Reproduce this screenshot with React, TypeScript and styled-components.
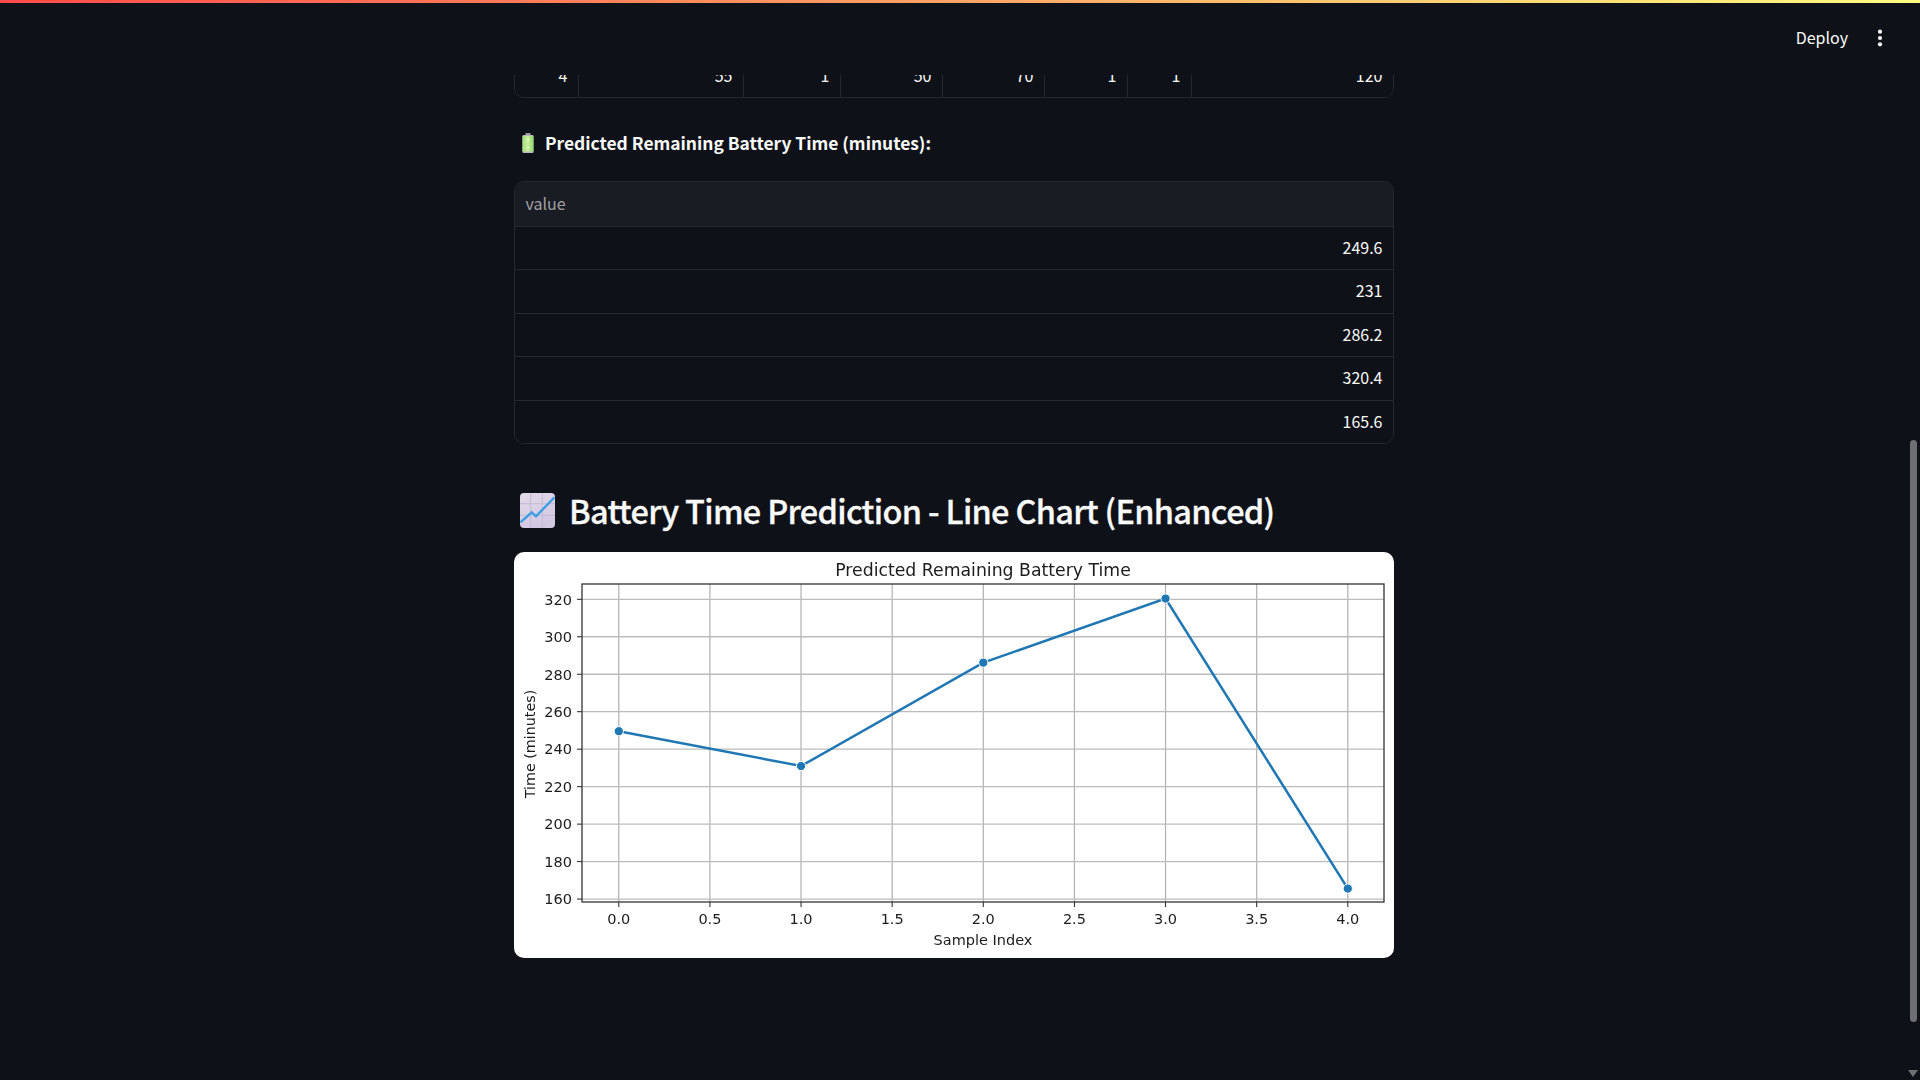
import styled, { createGlobalStyle } from "styled-components";

const GlobalStyle = createGlobalStyle`
    html, body {margin:0;padding:0;background:#0e1117;height:100%;overflow:hidden;}
    #root {height:100%;}
    * {box-sizing:border-box;}
`;

const SANS = `"Noto Sans CJK SC", "Source Sans Pro", "Noto Sans", sans-serif`;

const Page = styled.div`
    position: relative;
    height: 1080px;
    display: flex;
    flex-direction: column;
    background: #0e1117;
    color: #fafafa;
    font-family: ${SANS};
    overflow: hidden;
`;
const Header = styled.header`
    flex: 0 0 75px;
    position: relative;
    z-index: 2;
    background: #0e1117;
    display: flex;
    justify-content: flex-end;
    align-items: center;
    gap: 29px;
    padding: 0 37px 0 0;
    &::before {
        content: "";
        position: absolute;
        left: 0;
        right: 0;
        top: 0;
        height: 3px;
        background: linear-gradient(90deg, rgb(255,75,75), rgb(255,253,128));
    }
`;
const Deploy = styled.span`
    font-size: 16px;
    line-height: 30px;
    margin-bottom: 1px;
    color: #fafafa;
`;
const Main = styled.main`
    flex: 1;
    display: flex;
    justify-content: center;
    padding-right: 12px;
    overflow: hidden;
`;
const Column = styled.div`
    width: 880px;
    flex: none;
`;
const Table = styled.div<{ $clip?: number }>`
    margin-top: ${(p) => (p.$clip ? -p.$clip : 22)}px;
    border: 1px solid #26282e;
    border-radius: 10px;
    overflow: hidden;
    font-size: 16px;
`;
const Row = styled.div<{ $head?: boolean; $cols?: string }>`
    height: 43.5px;
    display: grid;
    grid-template-columns: ${(p) => p.$cols || "1fr"};
    background: ${(p) => (p.$head ? "#1a1c24" : "#0e1117")};
    & + & {border-top: 1px solid #26282e;}
`;
const Cell = styled.div<{ $head?: boolean }>`
    padding: 0 10.5px 2px;
    display: flex;
    align-items: center;
    justify-content: ${(p) => (p.$head ? "flex-start" : "flex-end")};
    color: ${(p) => (p.$head ? "rgba(250,250,250,0.6)" : "#fafafa")};
    & + & {border-left: 1px solid #26282e;}
`;
const ClippedCell = styled(Cell)`
    padding-bottom: 0;
`;
const Subheading = styled.p`
    margin: 29.5px 0 0;
    height: 32px;
    display: flex;
    align-items: center;
    gap: 11px;
    padding: 0 0 1px 8px;
    font-size: 17.4px;
    font-weight: 700;
    white-space: nowrap;
`;
const Title = styled.h2`
    margin: 40px 0 14px;
    height: 54px;
    display: flex;
    align-items: center;
    gap: 14px;
    padding: 0 0 2px 6px;
    font-size: 32.5px;
    font-weight: 500;
    letter-spacing: -0.7px;
    -webkit-text-stroke: 0.3px #fafafa;
    line-height: 52px;
    white-space: nowrap;
`;
const ChartCard = styled.div`
    height: 406px;
    background: #fff;
    border-radius: 10px;
    overflow: hidden;
    & svg {display:block;filter:blur(0.45px);}
    & text {font-family:"DejaVu Sans", sans-serif;fill:#1c1c1c;}
`;
const ScrollThumb = styled.div`
    position: absolute;
    left: 1910px;
    top: 440px;
    width: 7px;
    height: 582px;
    border-radius: 4px;
    background: #6e6f72;
`;
const ScrollArrow = styled.div`
    position: absolute;
    left: 1908px;
    top: 1070px;
    border-left: 5.5px solid transparent;
    border-right: 5.5px solid transparent;
    border-top: 7px solid #6e6f72;
`;

const firstCols = "63px 165px 97px 102px 102px 83px 64px 1fr";
const firstRow = ["4", "55", "1", "50", "70", "1", "1", "120"];
const predictions = ["249.6", "231", "286.2", "320.4", "165.6"];

const chart = { left: 68, right: 870, top: 32, bottom: 350 };
const xAt = (v: number) => 104.8 + v * 182.25;
const yAt = (v: number) => 47.3 + (320 - v) * 1.8735;
const xTicks = [0, 0.5, 1, 1.5, 2, 2.5, 3, 3.5, 4];
const yTicks = [160, 180, 200, 220, 240, 260, 280, 300, 320];
const points = [249.6, 231, 286.2, 320.4, 165.6];

function MoreIcon() {
    return (
        <svg width="6" height="20" viewBox="0 0 6 20">
            <circle cx="3" cy="3.7" r="2.1" fill="#fafafa" />
            <circle cx="3" cy="10" r="2.1" fill="#fafafa" />
            <circle cx="3" cy="16.3" r="2.1" fill="#fafafa" />
        </svg>
    );
}

function BatteryEmoji() {
    return (
        <svg width="12" height="20" viewBox="0 0 12 20">
            <defs>
                <linearGradient id="batt" x1="0" y1="0" x2="1" y2="0">
                    <stop offset="0" stopColor="#a6e07c" />
                    <stop offset="0.5" stopColor="#c8f09c" />
                    <stop offset="1" stopColor="#8fd468" />
                </linearGradient>
            </defs>
            <rect x="3.5" y="0" width="5" height="3" rx="0.6" fill="#9b9ba0" />
            <rect x="0.5" y="2" width="11" height="18" rx="1" fill="#b9b9bd" />
            <rect x="0.5" y="3" width="11" height="15.5" fill="url(#batt)" />
            <path d="M5 6.5h2M6 5.5v2M5 14.5h2" stroke="#fff" strokeWidth="0.9" />
        </svg>
    );
}

function ChartEmoji() {
    return (
        <svg width="35" height="35" viewBox="0 0 35 35">
            <defs>
                <linearGradient id="paper" x1="0" y1="0" x2="0.4" y2="1">
                    <stop offset="0" stopColor="#e2dbe9" />
                    <stop offset="1" stopColor="#d3c8e2" />
                </linearGradient>
            </defs>
            <rect width="35" height="35" rx="4" fill="url(#paper)" />
            <path d="M10.7 0v35M22.3 0v35M0 10.7h35M0 22.3h35" stroke="#c4b9d3" strokeWidth="1" />
            <path d="M0.5 29.3L11.7 19.3L16 23.3L34.5 4.3" fill="none" stroke="#3d9fe2" strokeWidth="2.4" />
        </svg>
    );
}

function LineChart() {
    const line = points.map((v, i) => `${xAt(i)},${yAt(v)}`).join(" ");
    return (
        <svg width="880" height="406" viewBox="0 0 880 406">
            <text x="469" y="23.5" fontSize="17.3" textAnchor="middle">Predicted Remaining Battery Time</text>
            {xTicks.map((t) => (
                <g key={t}>
                    <line x1={xAt(t)} x2={xAt(t)} y1={chart.top} y2={chart.bottom} stroke="#b0b0b0" strokeWidth="1.2" />
                    <line x1={xAt(t)} x2={xAt(t)} y1={chart.bottom} y2={chart.bottom + 5} stroke="#222" strokeWidth="1" />
                    <text x={xAt(t)} y="372" fontSize="14.5" textAnchor="middle">{t.toFixed(1)}</text>
                </g>
            ))}
            {yTicks.map((t) => (
                <g key={t}>
                    <line x1={chart.left} x2={chart.right} y1={yAt(t)} y2={yAt(t)} stroke="#bcbcbc" strokeWidth="1.3" />
                    <line x1={chart.left - 5} x2={chart.left} y1={yAt(t)} y2={yAt(t)} stroke="#222" strokeWidth="1" />
                    <text x={chart.left - 10} y={yAt(t) + 5.3} fontSize="14.5" textAnchor="end">{t}</text>
                </g>
            ))}
            <rect x={chart.left} y={chart.top} width={chart.right - chart.left} height={chart.bottom - chart.top} fill="none" stroke="#333" strokeWidth="1.3" />
            <polyline points={line} fill="none" stroke="#1f77b4" strokeWidth="2.5" />
            {points.map((v, i) => (
                <circle key={i} cx={xAt(i)} cy={yAt(v)} r="4.6" fill="#1f77b4" stroke="#fff" strokeWidth="1" />
            ))}
            <text x="469" y="393" fontSize="14.5" textAnchor="middle">Sample Index</text>
            <text transform="translate(21 192) rotate(-90)" fontSize="14.3" textAnchor="middle">Time (minutes)</text>
        </svg>
    );
}

export default function App() {
    return (
        <Page>
            <GlobalStyle />
            <Header>
                <Deploy>Deploy</Deploy>
                <MoreIcon />
            </Header>
            <Main>
                <Column>
                    <Table $clip={23}>
                        <Row $cols={firstCols}>
                            {firstRow.map((v, i) => <ClippedCell key={i}>{v}</ClippedCell>)}
                        </Row>
                    </Table>
                    <Subheading><BatteryEmoji />Predicted Remaining Battery Time (minutes):</Subheading>
                    <Table>
                        <Row $head><Cell $head>value</Cell></Row>
                        {predictions.map((v) => (
                            <Row key={v}><Cell>{v}</Cell></Row>
                        ))}
                    </Table>
                    <Title><ChartEmoji />Battery Time Prediction - Line Chart (Enhanced)</Title>
                    <ChartCard><LineChart /></ChartCard>
                </Column>
            </Main>
            <ScrollThumb />
            <ScrollArrow />
        </Page>
    );
}
